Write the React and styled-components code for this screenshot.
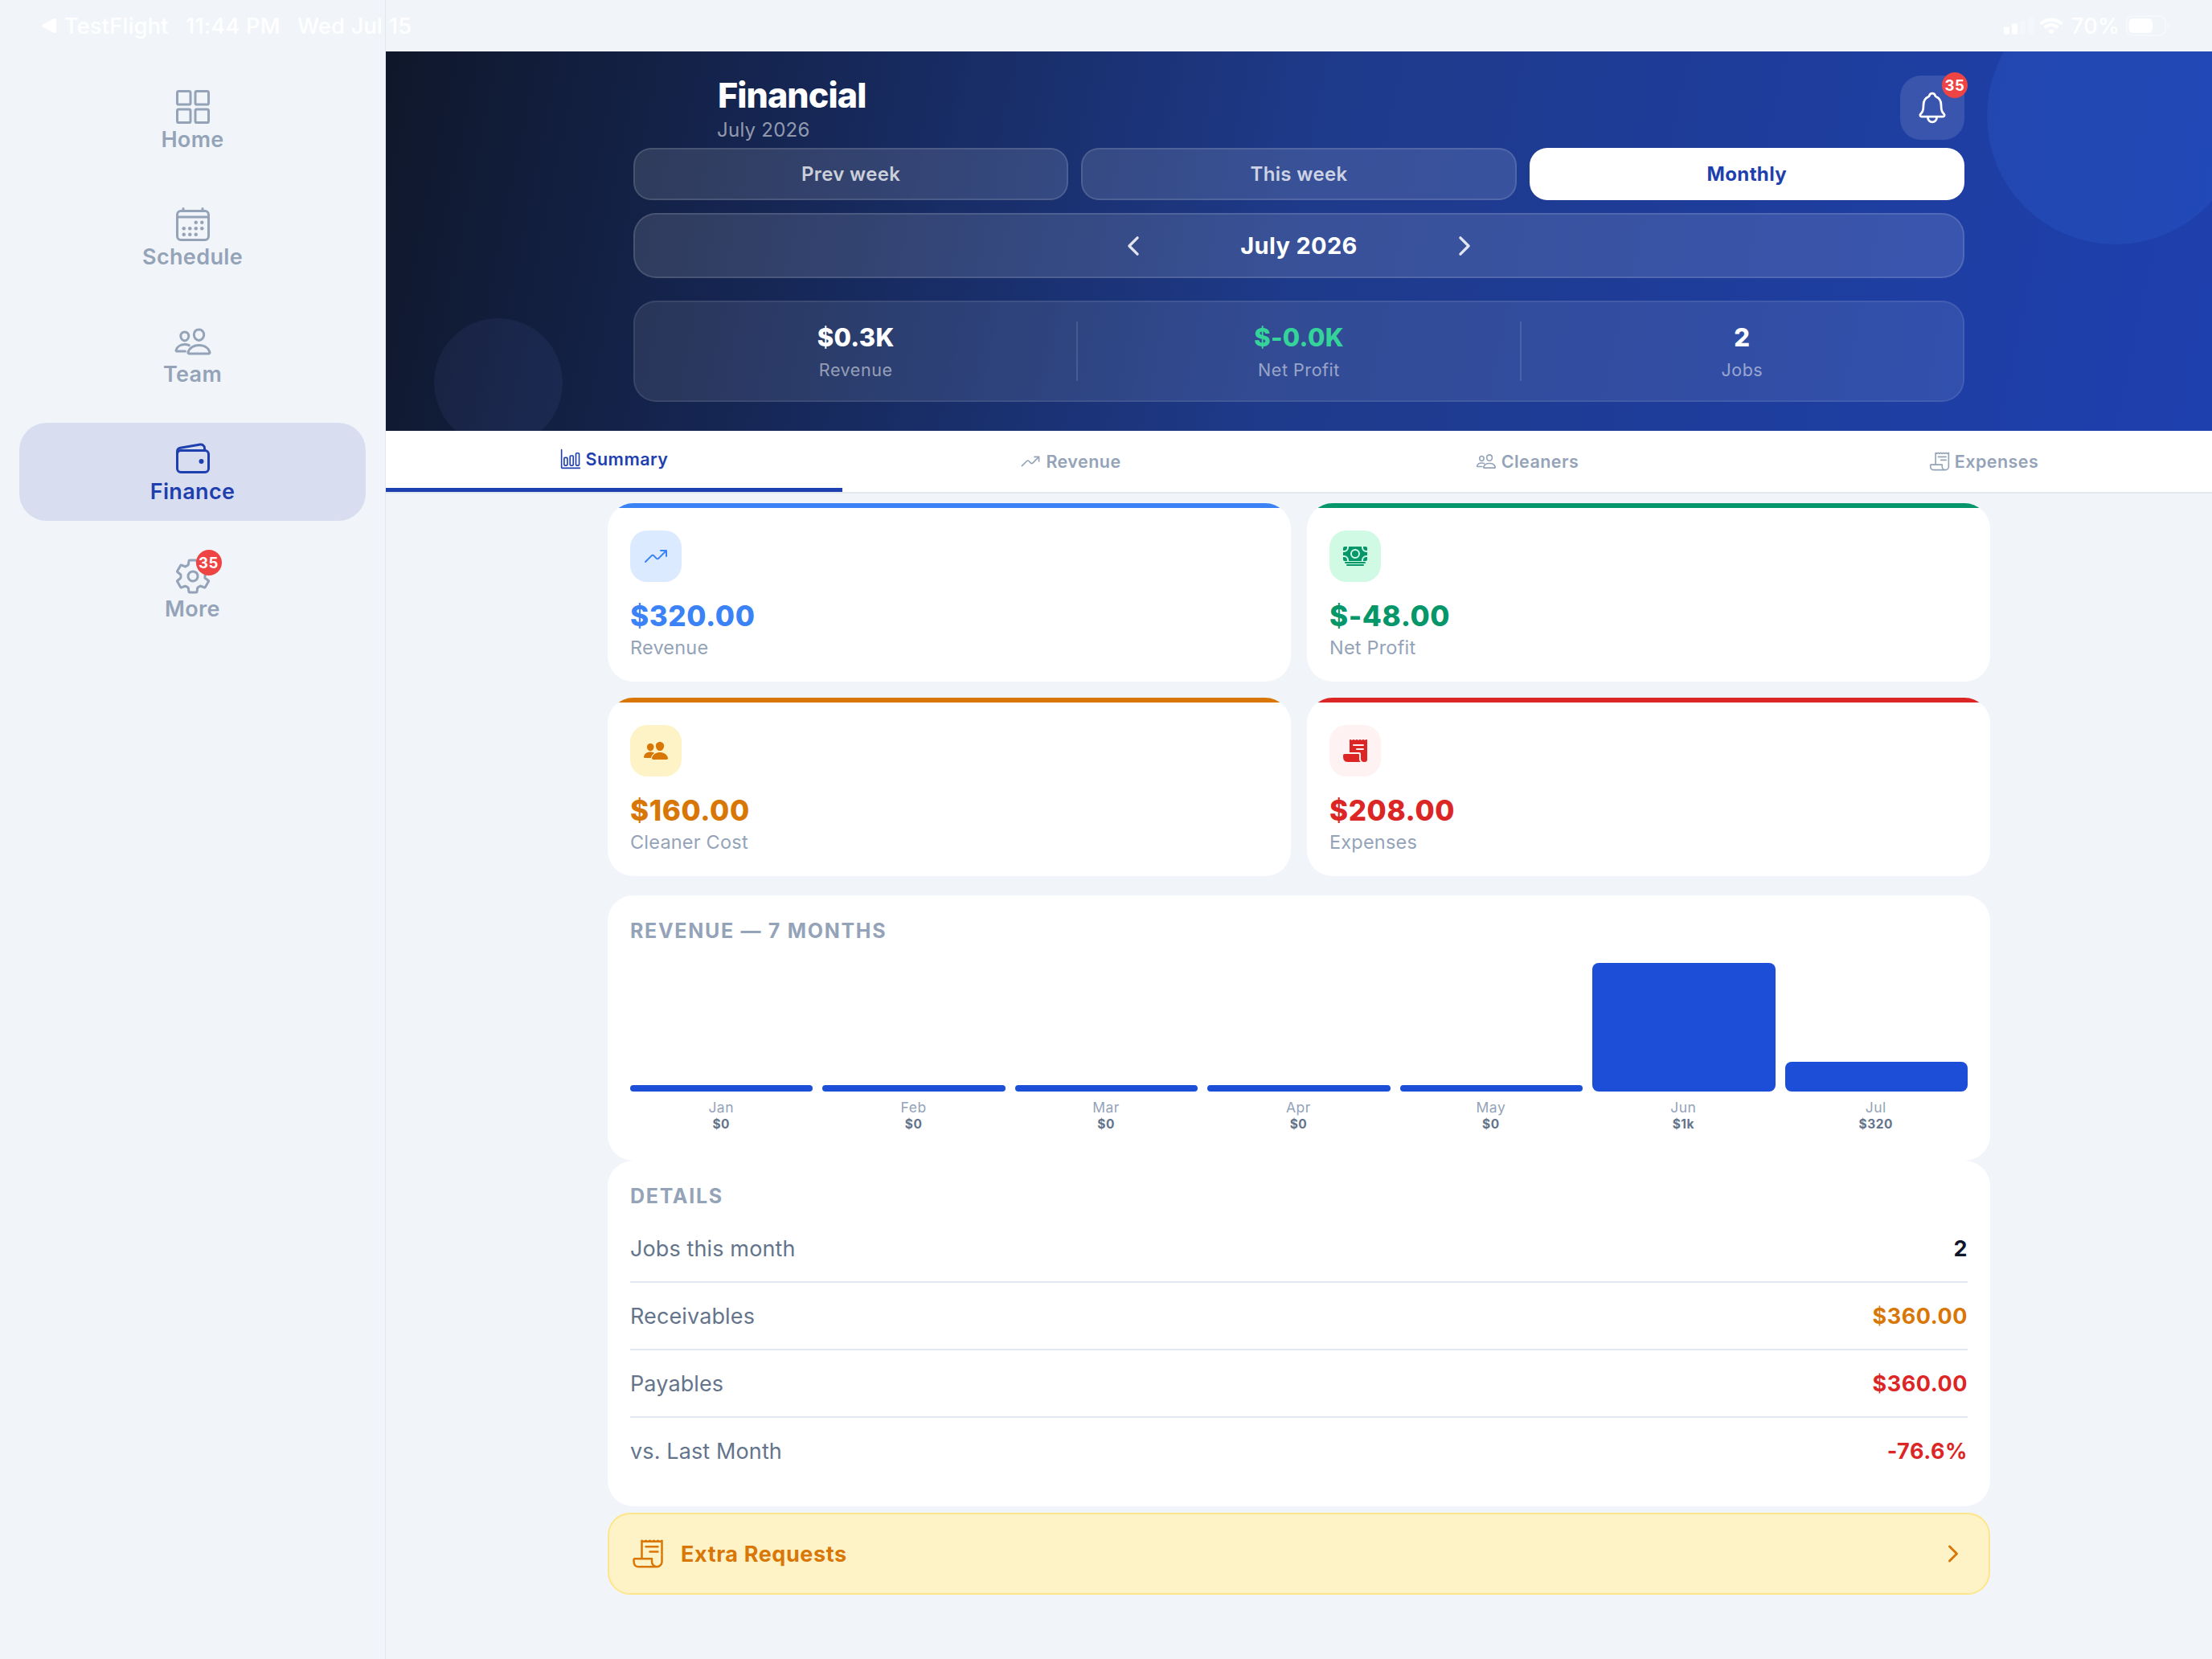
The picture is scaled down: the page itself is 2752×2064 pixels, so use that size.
import React from "react";
import styled, { createGlobalStyle } from "styled-components";
import {
    IoBarChartOutline,
    IoCalendarOutline,
    IoCash,
    IoChevronBack,
    IoChevronForward,
    IoGridOutline,
    IoNotificationsOutline,
    IoPeople,
    IoPeopleOutline,
    IoReceipt,
    IoReceiptOutline,
    IoSettingsOutline,
    IoTrendingUpOutline,
    IoWalletOutline,
} from "react-icons/io5";

const navItems = [
    { label: "Home", icon: IoGridOutline },
    { label: "Schedule", icon: IoCalendarOutline },
    { label: "Team", icon: IoPeopleOutline },
    { label: "Finance", icon: IoWalletOutline, active: true },
    { label: "More", icon: IoSettingsOutline, badge: 35 },
];

const periods = ["Prev week", "This week", "Monthly"];

const stats = [
    { value: "$0.3K", label: "Revenue" },
    { value: "$-0.0K", label: "Net Profit", color: "#34d399" },
    { value: "2", label: "Jobs" },
];

const tabs = [
    { label: "Summary", icon: IoBarChartOutline, active: true },
    { label: "Revenue", icon: IoTrendingUpOutline },
    { label: "Cleaners", icon: IoPeopleOutline },
    { label: "Expenses", icon: IoReceiptOutline },
];

const metrics = [
    { value: "$320.00", label: "Revenue", icon: IoTrendingUpOutline, color: "#3b82f6", tint: "#dbeafe" },
    { value: "$-48.00", label: "Net Profit", icon: IoCash, color: "#059669", tint: "#d1fae5" },
    { value: "$160.00", label: "Cleaner Cost", icon: IoPeople, color: "#d97706", tint: "#fef3c7" },
    { value: "$208.00", label: "Expenses", icon: IoReceipt, color: "#dc2626", tint: "#fef2f2" },
];

const months = [
    { name: "Jan", total: "$0", height: 8 },
    { name: "Feb", total: "$0", height: 8 },
    { name: "Mar", total: "$0", height: 8 },
    { name: "Apr", total: "$0", height: 8 },
    { name: "May", total: "$0", height: 8 },
    { name: "Jun", total: "$1k", height: 160 },
    { name: "Jul", total: "$320", height: 37 },
];

const details = [
    { label: "Jobs this month", value: "2", color: "#0f172a" },
    { label: "Receivables", value: "$360.00", color: "#d97706" },
    { label: "Payables", value: "$360.00", color: "#dc2626" },
    { label: "vs. Last Month", value: "-76.6%", color: "#dc2626" },
];

const StatusBar = () => (
    <StyledStatus>
        <svg width="18" height="20" viewBox="0 0 18 20">
            <path d="M1.2 8.6 15 1.3Q18 0 18 3v14q0 3-3 1.7L1.2 11.4Q-.8 10 1.2 8.6Z" fill="#fff" />
        </svg>
        <StatusText $width={151}>TestFlight</StatusText>
        <StatusText $width={139}>11:44 PM</StatusText>
        <StatusText>Wed Jul 15</StatusText>
        <StatusIcons>
            <svg width="38" height="22" viewBox="0 0 38 22" fill="#fff">
                <rect x="0" y="12.5" width="7" height="9" rx="1.5" />
                <rect x="10" y="8.5" width="7" height="13" rx="1.5" />
                <rect x="20" y="4.5" width="7" height="17" rx="1.5" opacity="0.3" />
                <rect x="30" y="0.5" width="7" height="21" rx="1.5" opacity="0.3" />
            </svg>
            <svg className="wifi" width="30" height="21" viewBox="0 0 30 21" fill="none" stroke="#fff">
                <path d="M2 7.8a18.4 18.4 0 0 1 26 0" strokeWidth="4" />
                <path d="M6.6 12.4a11.9 11.9 0 0 1 16.8 0" strokeWidth="3.8" />
                <path d="M15 20.6 10.8 16.4a6 6 0 0 1 8.4 0Z" fill="#fff" stroke="none" />
            </svg>
            <StatusText>70%</StatusText>
            <svg className="battery" width="55" height="26" viewBox="0 0 55 26">
                <rect x="1" y="1" width="48" height="24" rx="7.5" fill="none" stroke="#fff" strokeWidth="2" opacity="0.4" />
                <rect x="3.5" y="4" width="29.5" height="18" rx="5" fill="#fff" />
                <path d="M52 9q2.6 1.4 2.6 4T52 17Z" fill="#fff" opacity="0.4" />
            </svg>
        </StatusIcons>
    </StyledStatus>
);

const Sidebar = () => (
    <StyledSidebar>
        {navItems.map(({ label, icon: Icon, active, badge }) => (
            <NavItem key={label} $active={active}>
                <NavIcon>
                    <Icon size={48} />
                    {badge && <Badge $top={-9} $right={-12}>{badge}</Badge>}
                </NavIcon>
                {label}
            </NavItem>
        ))}
    </StyledSidebar>
);

const Header = () => (
    <StyledHeader>
        <Circle className="top" />
        <Circle className="bottom" />
        <HeaderContent>
            <TitleRow>
                <div>
                    <Title>Financial</Title>
                    <Subtitle>July 2026</Subtitle>
                </div>
                <BellButton>
                    <IoNotificationsOutline size={44} />
                    <Badge $top={-4} $right={-4}>35</Badge>
                </BellButton>
            </TitleRow>
            <PeriodRow>
                {periods.map((period) => (
                    <Period key={period} $active={period === "Monthly"}>
                        {period}
                    </Period>
                ))}
            </PeriodRow>
            <MonthPicker>
                <IoChevronBack size={36} />
                <MonthName>July 2026</MonthName>
                <IoChevronForward size={36} />
            </MonthPicker>
            <StatsPanel>
                {stats.map((stat) => (
                    <Stat key={stat.label}>
                        <StatValue $color={stat.color}>{stat.value}</StatValue>
                        <StatLabel>{stat.label}</StatLabel>
                    </Stat>
                ))}
            </StatsPanel>
        </HeaderContent>
    </StyledHeader>
);

const App = () => {
    return (
        <>
            <GlobalStyle />
            <Page>
                <StatusBar />
                <Sidebar />
                <Main>
                    <Header />
                    <TabBar>
                        {tabs.map(({ label, icon: Icon, active }) => (
                            <Tab key={label} $active={active}>
                                <Icon size={26} />
                                {label}
                            </Tab>
                        ))}
                    </TabBar>
                    <Content>
                        <MetricGrid>
                            {metrics.map(({ label, value, icon: Icon, color, tint }) => (
                                <Metric key={label} $color={color}>
                                    <MetricIcon $color={color} $tint={tint}>
                                        <Icon size={32} />
                                    </MetricIcon>
                                    <MetricValue $color={color}>{value}</MetricValue>
                                    <MetricLabel>{label}</MetricLabel>
                                </Metric>
                            ))}
                        </MetricGrid>
                        <Card>
                            <CardTitle>REVENUE — 7 MONTHS</CardTitle>
                            <Chart>
                                {months.map((month) => (
                                    <Column key={month.name}>
                                        <Bar style={{ height: month.height }} />
                                        <MonthLabel>{month.name}</MonthLabel>
                                        <MonthTotal>{month.total}</MonthTotal>
                                    </Column>
                                ))}
                            </Chart>
                        </Card>
                        <Card>
                            <CardTitle>DETAILS</CardTitle>
                            <DetailList>
                                {details.map((row) => (
                                    <DetailRow key={row.label}>
                                        {row.label}
                                        <DetailValue $color={row.color}>{row.value}</DetailValue>
                                    </DetailRow>
                                ))}
                            </DetailList>
                        </Card>
                        <ExtraButton>
                            <IoReceiptOutline size={40} />
                            <span>Extra Requests</span>
                            <IoChevronForward size={32} />
                        </ExtraButton>
                    </Content>
                </Main>
            </Page>
        </>
    );
};

export default App;

const GlobalStyle = createGlobalStyle`
    * {
        box-sizing: border-box;
    }

    body {
        margin: 0;
        background: #f1f5f9;
        font-family: Inter, "Liberation Sans", sans-serif;
    }

    button {
        font-family: inherit;
        border: none;
        padding: 0;
    }

    svg {
        display: block;
        flex-shrink: 0;
    }
`;

const Page = styled.div`
    position: relative;
    display: flex;
    width: 2752px;
    height: 2064px;
    overflow: hidden;
`;

const StyledStatus = styled.div`
    position: absolute;
    z-index: 2;
    top: 0;
    left: 0;
    right: 0;
    height: 64px;
    display: flex;
    align-items: center;
    padding: 0 52px;
`;

const StatusText = styled.span`
    width: ${({ $width }) => ($width ? `${$width}px` : "auto")};
    color: #ffffff;
    font-size: 27px;
    font-weight: 500;
    letter-spacing: 0.3px;
    line-height: 65px;
    white-space: nowrap;

    svg + & {
        margin-left: 10px;
    }
`;

const StatusIcons = styled.div`
    display: flex;
    align-items: center;
    margin-left: auto;

    .wifi {
        margin-left: 6px;
    }

    .battery {
        margin-left: 8px;
    }
`;

const StyledSidebar = styled.nav`
    width: 480px;
    height: 100%;
    padding: 88px 24px 0;
    border-right: 1px solid #e2e8f0;
    display: flex;
    flex-direction: column;
    gap: 24px;
`;

const NavItem = styled.a`
    display: flex;
    flex-direction: column;
    align-items: center;
    height: 122px;
    padding-top: 21px;
    border-radius: 34px;
    background: ${({ $active }) => ($active ? "#d8def0" : "transparent")};
    color: ${({ $active }) => ($active ? "#1e40af" : "#94a3b8")};
    font-size: 27px;
    font-weight: 600;
    letter-spacing: 0.35px;
    line-height: 34px;
`;

const NavIcon = styled.div`
    position: relative;
`;

const Badge = styled.span`
    position: absolute;
    top: ${({ $top }) => $top}px;
    right: ${({ $right }) => $right}px;
    width: 32px;
    height: 32px;
    border-radius: 50%;
    background: #ef4444;
    color: #ffffff;
    font-size: 18.5px;
    font-weight: 700;
    letter-spacing: 0.5px;
    line-height: 32px;
    text-align: center;
`;

const Main = styled.main`
    flex: 1;
    padding-top: 64px;
`;

const StyledHeader = styled.header`
    position: relative;
    height: 472px;
    padding-top: 28px;
    overflow: hidden;
    background: linear-gradient(101.74deg, #0f172a, #1e3a8a 50%, #1e40af);
`;

const Circle = styled.div`
    position: absolute;
    border-radius: 50%;

    &.top {
        top: -80px;
        right: -40px;
        width: 320px;
        height: 320px;
        background: rgba(59, 130, 246, 0.15);
    }

    &.bottom {
        bottom: -20px;
        left: 60px;
        width: 160px;
        height: 160px;
        background: rgba(129, 140, 248, 0.08);
    }
`;

const HeaderContent = styled.div`
    position: relative;
    width: 1656px;
    margin: 0 auto;
`;

const TitleRow = styled.div`
    display: flex;
    justify-content: space-between;
    height: 92px;
    padding-left: 104px;
`;

const Title = styled.h1`
    margin: 0 0 0 1px;
    color: #ffffff;
    font-size: 43px;
    font-weight: 800;
    letter-spacing: -0.9px;
    line-height: 52px;
`;

const Subtitle = styled.div`
    margin-top: 2px;
    color: rgba(255, 255, 255, 0.55);
    font-size: 24px;
    letter-spacing: 0.25px;
    line-height: 31px;
`;

const BellButton = styled.button`
    position: relative;
    display: flex;
    align-items: center;
    justify-content: center;
    width: 80px;
    height: 80px;
    margin-top: 2px;
    border-radius: 26px;
    background: rgba(255, 255, 255, 0.12);
    color: #ffffff;
`;

const PeriodRow = styled.div`
    display: grid;
    grid-template-columns: repeat(3, 1fr);
    gap: 16px;
`;

const Period = styled.button`
    height: 65px;
    border: ${({ $active }) => ($active ? "none" : "2px solid rgba(255, 255, 255, 0.12)")};
    border-radius: 22px;
    background: ${({ $active }) => ($active ? "#ffffff" : "rgba(255, 255, 255, 0.12)")};
    color: ${({ $active }) => ($active ? "#1e40af" : "rgba(255, 255, 255, 0.75)")};
    font-size: 24px;
    font-weight: ${({ $active }) => ($active ? 700 : 600)};
    letter-spacing: 0.35px;
`;

const MonthPicker = styled.div`
    display: flex;
    align-items: center;
    justify-content: center;
    height: 81px;
    margin-top: 16px;
    border: 2px solid rgba(255, 255, 255, 0.12);
    border-radius: 28px;
    background: rgba(255, 255, 255, 0.12);
    color: rgba(255, 255, 255, 0.85);
`;

const MonthName = styled.div`
    width: 376px;
    color: #ffffff;
    font-size: 29px;
    font-weight: 700;
    letter-spacing: 0.35px;
    text-align: center;
`;

const StatsPanel = styled.div`
    display: flex;
    height: 126px;
    margin-top: 28px;
    padding: 24px 0;
    border: 2px solid rgba(255, 255, 255, 0.08);
    border-radius: 28px;
    background: rgba(255, 255, 255, 0.09);
`;

const Stat = styled.div`
    flex: 1 1 0;
    box-sizing: content-box;
    text-align: center;

    &:not(:last-child) {
        border-right: 2px solid rgba(255, 255, 255, 0.12);
    }
`;

const StatValue = styled.div`
    color: ${({ $color }) => $color || "#ffffff"};
    font-size: 31px;
    font-weight: 800;
    letter-spacing: 0.3px;
    line-height: 40px;
`;

const StatLabel = styled.div`
    margin-top: 6px;
    color: rgba(255, 255, 255, 0.5);
    font-size: 21.5px;
    letter-spacing: 0.55px;
    line-height: 28px;
`;

const TabBar = styled.div`
    display: grid;
    grid-template-columns: repeat(4, 1fr);
    height: 78px;
    border-bottom: 2px solid #e2e8f0;
    background: #ffffff;
`;

const Tab = styled.a`
    display: flex;
    align-items: center;
    justify-content: center;
    gap: 6px;
    padding-bottom: 1px;
    border-bottom: ${({ $active }) => ($active ? "5px solid #1e40af" : "none")};
    color: ${({ $active }) => ($active ? "#1e40af" : "#94a3b8")};
    font-size: 21.5px;
    font-weight: 600;
    letter-spacing: 0.45px;
    line-height: 26px;
`;

const Content = styled.div`
    width: 1720px;
    margin: 0 auto;
    padding-top: 12px;
`;

const MetricGrid = styled.div`
    display: grid;
    grid-template-columns: 1fr 1fr;
    gap: 20px;
    margin-bottom: 24px;
`;

const Metric = styled.div`
    height: 222px;
    padding: 34px 28px 0;
    border-radius: 32px;
    background: linear-gradient(${({ $color }) => $color} 6px, #ffffff 6px);
`;

const MetricIcon = styled.div`
    display: flex;
    align-items: center;
    justify-content: center;
    width: 64px;
    height: 64px;
    border-radius: 21px;
    background: ${({ $tint }) => $tint};
    color: ${({ $color }) => $color};
`;

const MetricValue = styled.div`
    margin-top: 20px;
    color: ${({ $color }) => $color};
    font-size: 35px;
    font-weight: 800;
    letter-spacing: 0.6px;
    line-height: 44px;
`;

const MetricLabel = styled.div`
    margin-top: 3px;
    color: #94a3b8;
    font-size: 23.5px;
    letter-spacing: 0.2px;
    line-height: 30px;
`;

const Card = styled.section`
    padding: 28px;
    border-radius: 32px;
    background: #ffffff;
`;

const CardTitle = styled.h2`
    margin: 0;
    color: #94a3b8;
    font-size: 25px;
    font-weight: 700;
    letter-spacing: 1.7px;
    line-height: 33px;
`;

const Chart = styled.div`
    display: flex;
    align-items: flex-end;
    gap: 12px;
    height: 233px;
    margin-bottom: 8px;
`;

const Column = styled.div`
    flex: 1;
    text-align: center;
`;

const Bar = styled.div`
    border-radius: 8px;
    background: #1d4ed8;
`;

const MonthLabel = styled.div`
    margin-top: 10px;
    padding-right: 1px;
    color: #94a3b8;
    font-size: 17.5px;
    letter-spacing: 0.5px;
    line-height: 19px;
`;

const MonthTotal = styled.div`
    padding: 1px 1px 0 0;
    margin-bottom: -1px;
    color: #64748b;
    font-size: 15.5px;
    font-weight: 700;
    letter-spacing: 0.5px;
    line-height: 21px;
`;

const DetailList = styled.div`
    margin-top: 7px;
`;

const DetailRow = styled.div`
    display: flex;
    align-items: center;
    justify-content: space-between;
    height: 84px;
    border-bottom: 2px solid #e2e8f0;
    color: #64748b;
    font-size: 27px;
    letter-spacing: 0.12px;

    &:last-child {
        height: 82px;
        border-bottom: none;
    }
`;

const DetailValue = styled.span`
    color: ${({ $color }) => $color};
    font-weight: 700;
    letter-spacing: 0.55px;
`;

const ExtraButton = styled.button`
    display: flex;
    align-items: center;
    width: 100%;
    height: 102px;
    margin-top: 8px;
    padding: 0 28px;
    border: 2px solid #fde68a;
    border-radius: 28px;
    background: #fef3c7;
    color: #d97706;
    font-size: 27px;
    font-weight: 700;
    letter-spacing: 0.6px;

    span {
        flex: 1;
        margin-left: 21px;
        text-align: left;
    }
`;
